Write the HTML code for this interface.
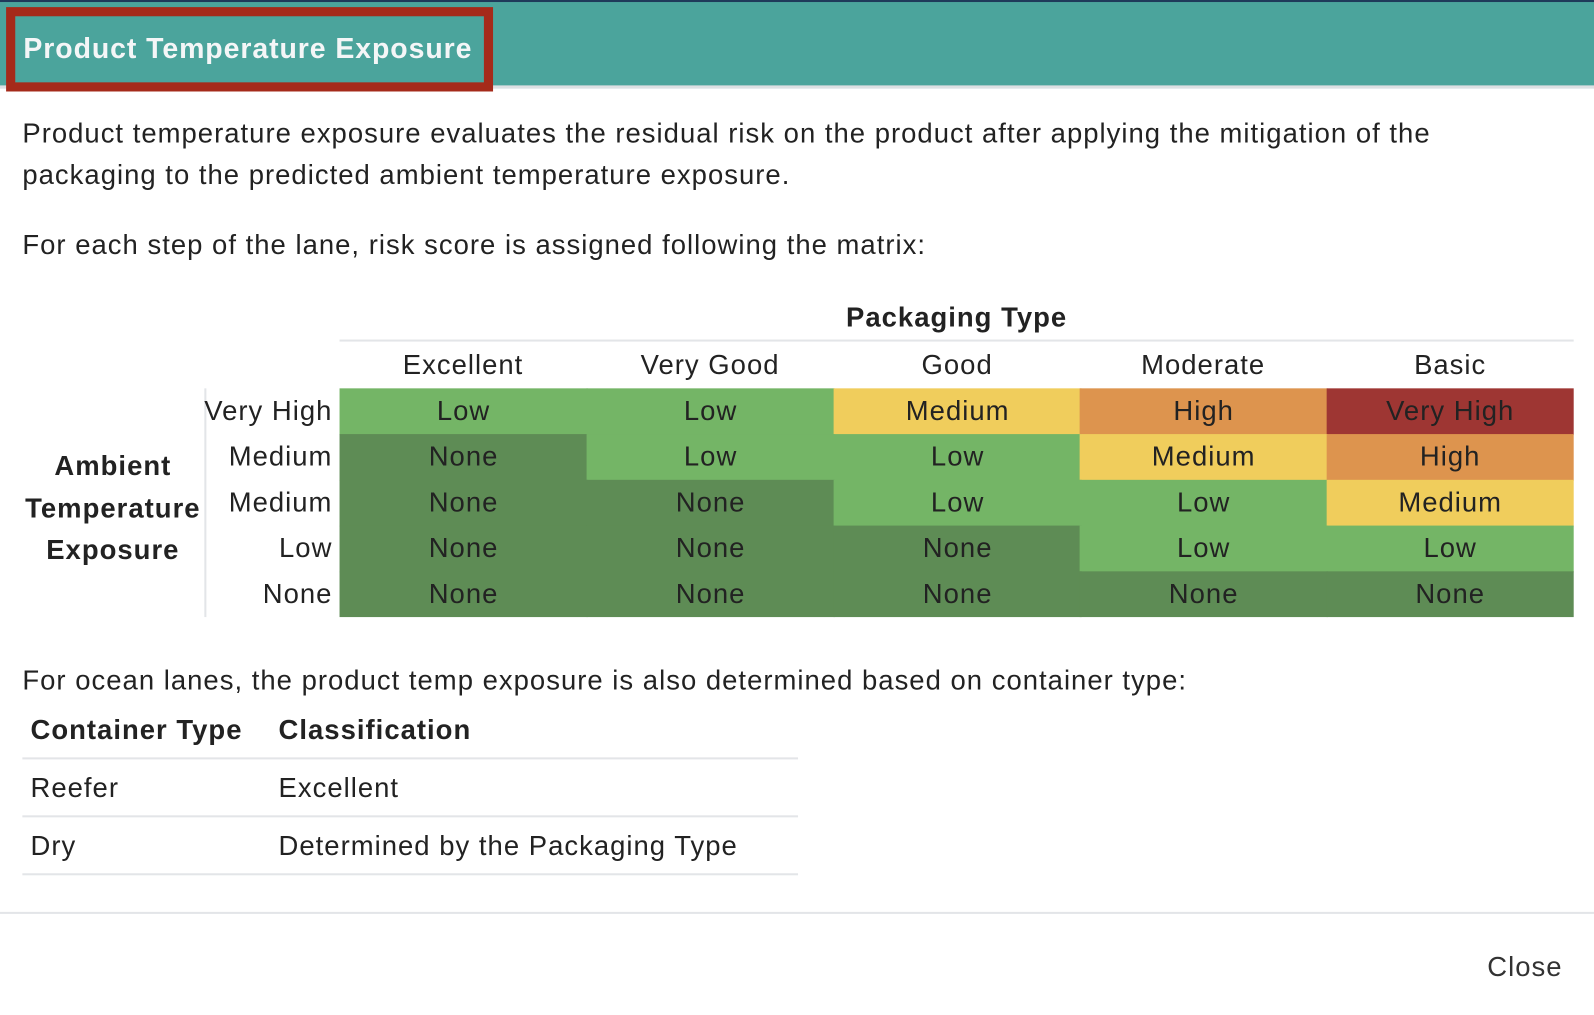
<!DOCTYPE html>
<html><head><meta charset="utf-8"><style>
*{margin:0;padding:0;box-sizing:border-box}
html,body{width:1594px;height:1014px;overflow:hidden;background:#fff}
body{font-family:"Liberation Sans",sans-serif;color:#222}
#w{position:absolute;left:0;top:0;width:1568px;height:998px;transform:scale(1.0166);transform-origin:0 0}
.hdr{position:absolute;left:0;top:0;width:1568px;height:87px;background:#4ba49c;border-top:2px solid #1f3a5a;border-bottom:3px solid #dde0e3}
.box{position:absolute;left:6px;top:7px;width:479px;height:83px;border:9px solid #a52a1a}
.box span{position:absolute;left:8px;top:16px;color:#f4f6f7;font-weight:bold;font-size:28px;letter-spacing:0.9px;white-space:nowrap}
.t{position:absolute;font-size:27px;letter-spacing:1px;white-space:nowrap}
.c{position:absolute;width:244px;height:46px;line-height:45px;text-align:center;font-size:27px;letter-spacing:1px}
.L{background:#74b566}.D{background:#5e8c55}.Y{background:#f0cd5c}.O{background:#dd944e}.R{background:#9e3633}
.rl{position:absolute;right:1241px;font-size:27px;letter-spacing:1px;text-align:right;white-space:nowrap}
.ch{position:absolute;width:243px;text-align:center;font-size:27px;letter-spacing:1px}
.hl{position:absolute;height:2px;background:#e3e5e8}
</style></head><body><div id="w">
<div class="hdr"></div>
<div class="box"><span>Product Temperature Exposure</span></div>
<div class="t" style="left:22px;top:116px">Product temperature exposure evaluates the residual risk on the product after applying the mitigation of the</div>
<div class="t" style="left:22px;top:157px">packaging to the predicted ambient temperature exposure.</div>
<div class="t" style="left:22px;top:226px">For each step of the lane, risk score is assigned following the matrix:</div>
<div class="t" style="left:334px;width:1214px;text-align:center;top:297px;font-weight:bold">Packaging Type</div>
<div class="hl" style="left:334px;top:334px;width:1214px"></div>
<div class="ch" style="left:334px;top:344px">Excellent</div>
<div class="ch" style="left:577px;top:344px">Very Good</div>
<div class="ch" style="left:820px;top:344px">Good</div>
<div class="ch" style="left:1062px;top:344px">Moderate</div>
<div class="ch" style="left:1305px;top:344px">Basic</div>
<div style="position:absolute;left:201px;top:382px;width:2px;height:225px;background:#e3e5e8"></div>
<div class="t" style="left:20px;width:182px;text-align:center;top:438px;font-weight:bold;line-height:41.5px;white-space:normal">Ambient<br>Temperature<br>Exposure</div>
<div class="rl" style="top:389px">Very High</div>
<div class="rl" style="top:434px">Medium</div>
<div class="rl" style="top:479px">Medium</div>
<div class="rl" style="top:524px">Low</div>
<div class="rl" style="top:569px">None</div>

<div class="c L" style="left:334px;top:382px">Low</div>
<div class="c L" style="left:577px;top:382px">Low</div>
<div class="c Y" style="left:820px;top:382px">Medium</div>
<div class="c O" style="left:1062px;top:382px">High</div>
<div class="c R" style="left:1305px;top:382px;width:243px">Very High</div>

<div class="c D" style="left:334px;top:427px">None</div>
<div class="c L" style="left:577px;top:427px">Low</div>
<div class="c L" style="left:820px;top:427px">Low</div>
<div class="c Y" style="left:1062px;top:427px">Medium</div>
<div class="c O" style="left:1305px;top:427px;width:243px">High</div>

<div class="c D" style="left:334px;top:472px">None</div>
<div class="c D" style="left:577px;top:472px">None</div>
<div class="c L" style="left:820px;top:472px">Low</div>
<div class="c L" style="left:1062px;top:472px">Low</div>
<div class="c Y" style="left:1305px;top:472px;width:243px">Medium</div>

<div class="c D" style="left:334px;top:517px">None</div>
<div class="c D" style="left:577px;top:517px">None</div>
<div class="c D" style="left:820px;top:517px">None</div>
<div class="c L" style="left:1062px;top:517px">Low</div>
<div class="c L" style="left:1305px;top:517px;width:243px">Low</div>

<div class="c D" style="left:334px;top:562px;height:45px">None</div>
<div class="c D" style="left:577px;top:562px;height:45px">None</div>
<div class="c D" style="left:820px;top:562px;height:45px">None</div>
<div class="c D" style="left:1062px;top:562px;height:45px">None</div>
<div class="c D" style="left:1305px;top:562px;height:45px;width:243px">None</div>

<div class="t" style="left:22px;top:654px">For ocean lanes, the product temp exposure is also determined based on container type:</div>
<div class="t" style="left:30px;top:703px;font-weight:bold">Container Type</div>
<div class="t" style="left:274px;top:703px;font-weight:bold">Classification</div>
<div class="hl" style="left:22px;top:745px;width:763px"></div>
<div class="t" style="left:30px;top:760px">Reefer</div>
<div class="t" style="left:274px;top:760px">Excellent</div>
<div class="hl" style="left:22px;top:802px;width:763px"></div>
<div class="t" style="left:30px;top:817px">Dry</div>
<div class="t" style="left:274px;top:817px">Determined by the Packaging Type</div>
<div class="hl" style="left:22px;top:859px;width:763px"></div>
<div class="hl" style="left:0;top:897px;width:1568px"></div>
<div class="t" style="left:1463px;top:936px;color:#333">Close</div>
</div></body></html>
